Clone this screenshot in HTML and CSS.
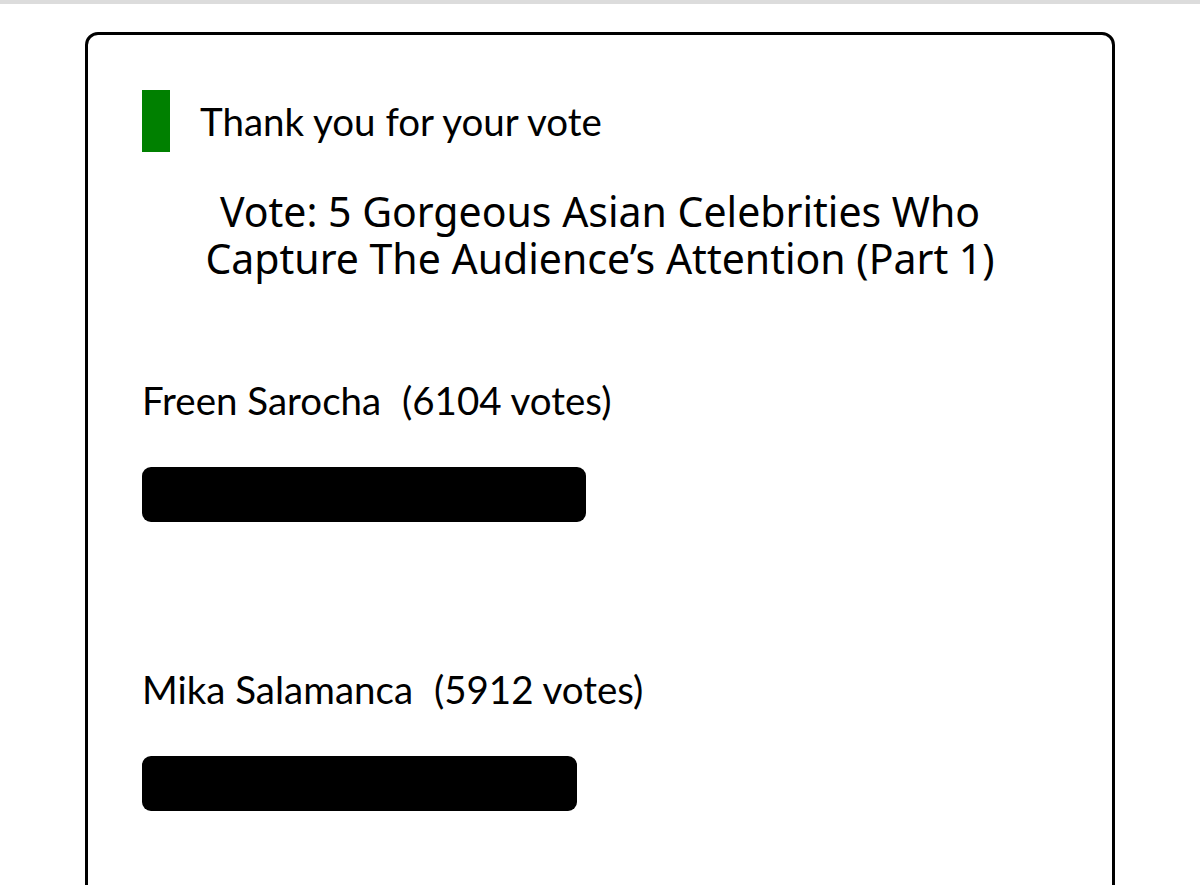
FILE: index.html
```html
<!DOCTYPE html>
<html lang="en">
<head>
<meta charset="utf-8">
<title>Poll results</title>
<link rel="stylesheet" href="styles.css">
</head>
<body>
<div class="topbar"></div>
<main class="card">
  <div class="thanks">
    <span class="mark"></span>
    <span class="thanks-text">Thank you for your vote</span>
  </div>
  <h1 class="title"><span class="title-line">Vote: 5 Gorgeous Asian Celebrities Who</span><span class="title-line">Capture The Audience’s Attention (Part 1)</span></h1>
  <ul class="results">
    <li class="result">
      <div class="label">Freen Sarocha <span class="count">(6104 votes)</span></div>
      <div class="bar" style="width:444px"></div>
    </li>
    <li class="result">
      <div class="label">Mika Salamanca <span class="count">(5912 votes)</span></div>
      <div class="bar" style="width:435px"></div>
    </li>
  </ul>
</main>
</body>
</html>
```

FILE: styles.css
```css
html, body {
  margin: 0;
  padding: 0;
  background: #fff;
  height: 885px;
  overflow: hidden;
}
body {
  font-family: "Lato", "Liberation Sans", sans-serif;
  color: #000;
}
.topbar {
  height: 4px;
  background: #dcdcdc;
}
.card {
  margin: 28px 0 0 85px;
  width: 1030px;
  box-sizing: border-box;
  border: 3px solid #000;
  border-radius: 13px;
  padding: 55px 54px 0 54px;
  min-height: 900px;
}
.thanks {
  display: flex;
  align-items: center;
  gap: 30px;
}
.mark {
  width: 28px;
  height: 62px;
  background: #008000;
  flex: none;
}
.thanks-text {
  font-size: 38.5px;
  line-height: 44px;
}
.title {
  font-family: "Noto Sans", "Open Sans", sans-serif;
  font-weight: 400;
  font-size: 41px;
  line-height: 47px;
  text-align: center;
  margin: 36px 0 0 0;
}
.title-line {
  display: block;
}
.results {
  list-style: none;
  margin: 0;
  padding: 0;
}
.result {
  padding-top: 96px;
}
.result + .result {
  padding-top: 145px;
}
.label {
  font-size: 38.5px;
  line-height: 44px;
}
.count {
  margin-left: 11px;
}
.bar {
  height: 55px;
  background: #000;
  border-radius: 9px;
  margin-top: 45px;
}
```
